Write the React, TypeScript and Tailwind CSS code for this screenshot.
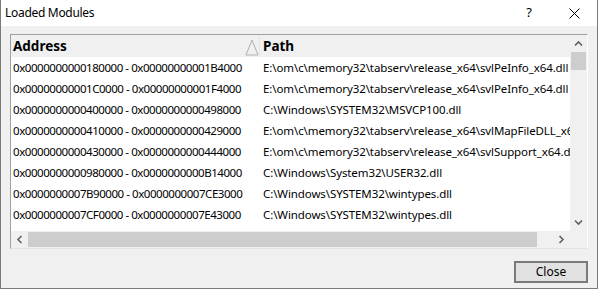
const modules = [
  { range: "0x0000000000180000 - 0x00000000001B4000", path: "E:\\om\\c\\memory32\\tabserv\\release_x64\\svlPeInfo_x64.dll" },
  { range: "0x00000000001C0000 - 0x00000000001F4000", path: "E:\\om\\c\\memory32\\tabserv\\release_x64\\svlPeInfo_x64.dll" },
  { range: "0x0000000000400000 - 0x0000000000498000", path: "C:\\Windows\\SYSTEM32\\MSVCP100.dll" },
  { range: "0x0000000000410000 - 0x0000000000429000", path: "E:\\om\\c\\memory32\\tabserv\\release_x64\\svlMapFileDLL_x64.dll" },
  { range: "0x0000000000430000 - 0x0000000000444000", path: "E:\\om\\c\\memory32\\tabserv\\release_x64\\svlSupport_x64.dll" },
  { range: "0x0000000000980000 - 0x0000000000B14000", path: "C:\\Windows\\System32\\USER32.dll" },
  { range: "0x0000000007B90000 - 0x0000000007CE3000", path: "C:\\Windows\\SYSTEM32\\wintypes.dll" },
  { range: "0x0000000007CF0000 - 0x0000000007E43000", path: "C:\\Windows\\SYSTEM32\\wintypes.dll" },
];

// small scrollbar chevron, rotated per direction
function Chevron({ dir }: { dir: "up" | "down" | "left" | "right" }) {
  const rot = { up: 0, right: 90, down: 180, left: 270 }[dir];
  return (
    <svg width="9" height="9" viewBox="0 0 9 9" style={{ transform: `rotate(${rot}deg)` }}>
      <path d="M1 6.5 L4.5 3 L8 6.5" fill="none" stroke="#606060" strokeWidth="1.6" />
    </svg>
  );
}

export default function App() {
  return (
    <div
      className="w-[598px] h-[289px] flex flex-col border-x border-b border-[#7a7a7a] bg-[#f0f0f0] text-black"
      style={{ fontFamily: '"Noto Sans", "Open Sans", sans-serif' }}
    >
      {/* title bar */}
      <div className="h-[26px] bg-white flex items-center pl-[4px] text-[12px]">
        <span className="tracking-[-0.3px]">Loaded Modules</span>
        <span className="ml-auto mr-[37px] text-[13px]">?</span>
        <svg width="11" height="11" viewBox="0 0 11 11" className="mr-[17px]">
          <path d="M0.5 0.5 L10.5 10.5 M10.5 0.5 L0.5 10.5" stroke="#000" strokeWidth="1" />
        </svg>
      </div>

      {/* list view */}
      <div className="mt-[8px] ml-[9px] w-[578px] h-[215px] border-l border-t border-[#a0a0a0] border-r-[#ffffff] border-b-[#e3e3e3] border-r border-b flex flex-col">
        <div className="flex h-[196px]">
          <div className="w-[559px] overflow-hidden bg-white text-[11.5px]">
            {/* header */}
            <div className="h-[22px] flex bg-[#f0f0f0] font-bold text-[13.5px]">
              <div className="w-[248px] flex items-center pl-[2px]">
                <span>Address</span>
                <svg width="14" height="17" viewBox="0 0 14 17" className="ml-auto mt-[2px]">
                  <path d="M7 1 L13 16 L1 16 Z" fill="none" stroke="#b0b0b0" strokeWidth="1" />
                </svg>
              </div>
              <div className="w-px bg-[#e5e5e5]" />
              <div className="flex items-center pl-[3px]">Path</div>
            </div>
            {modules.map((m, i) => (
              <div key={i} className="h-[21px] flex items-center whitespace-nowrap">
                <div className="w-[248px] pl-[2px] shrink-0 tracking-[-0.45px]">{m.range}</div>
                <div className="pl-[4px] tracking-[-0.1px]">{m.path}</div>
              </div>
            ))}
          </div>
          {/* vertical scrollbar */}
          <div className="w-[17px] flex flex-col bg-[#f0f0f0]">
            <div className="h-[17px] flex items-center justify-center">
              <Chevron dir="up" />
            </div>
            <div className="h-[18px] mx-[1px] bg-[#cdcdcd]" />
            <div className="flex-1" />
            <div className="h-[17px] flex items-center justify-center">
              <Chevron dir="down" />
            </div>
          </div>
        </div>
        {/* horizontal scrollbar */}
        <div className="flex h-[17px] bg-[#f0f0f0]">
          <div className="w-[17px] flex items-center justify-center">
            <Chevron dir="left" />
          </div>
          <div className="w-[509px] my-[1px] bg-[#cdcdcd]" />
          <div className="flex-1" />
          <div className="w-[17px] flex items-center justify-center">
            <Chevron dir="right" />
          </div>
          <div className="w-[17px]" />
        </div>
      </div>

      {/* buttons */}
      <div className="flex justify-end mt-[12px] mr-[9px]">
        <button className="w-[74px] h-[22px] border-2 border-[#7a7a7a] bg-[#e1e1e1] text-[12px] flex items-center justify-center">
          Close
        </button>
      </div>
    </div>
  );
}
